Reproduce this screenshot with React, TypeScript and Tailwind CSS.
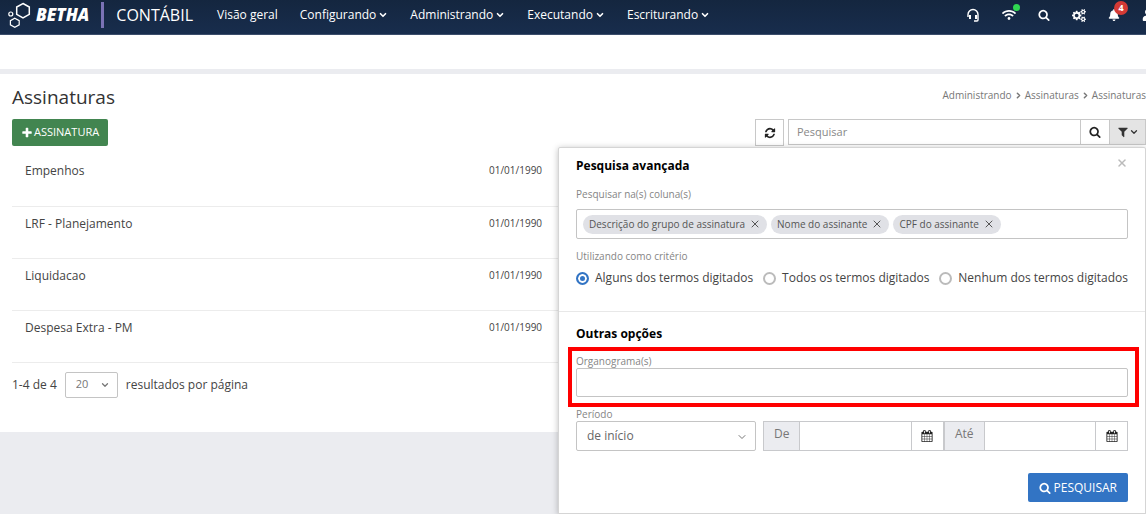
import { ChevronDown, ChevronRight, X } from 'lucide-react';
import type { FC, ReactNode } from 'react';
import { useState } from 'react';
import { FaBell, FaUser, FaWifi } from 'react-icons/fa';

const iconPaths = {
  search:
    'M1216 832q0-185-131.5-316.5t-316.5-131.5-316.5 131.5-131.5 316.5 131.5 316.5 316.5 131.5 316.5-131.5 131.5-316.5zm512 832q0 52-38 90t-90 38q-54 0-90-38l-343-342q-179 124-399 124-143 0-273.5-55.5t-225-150-150-225-55.5-273.5 55.5-273.5 150-225 225-150 273.5-55.5 273.5 55.5 225 150 150 225 55.5 273.5q0 220-124 399l343 343q37 37 37 90z',
  refresh:
    'M1639 1056q0 5-1 7-64 268-268 434.5t-478 166.5q-146 0-282.5-55t-243.5-157l-129 129q-19 19-45 19t-45-19-19-45v-448q0-26 19-45t45-19h448q26 0 45 19t19 45-19 45l-137 137q71 66 161 102t187 36q134 0 250-65t186-179q11-17 53-117 8-23 30-23h192q13 0 22.5 9.5t9.5 22.5zm25-800v448q0 26-19 45t-45 19h-448q-26 0-45-19t-19-45 19-45l138-138q-148-137-349-137-134 0-250 65t-186 179q-11 17-53 117-8 23-30 23h-199q-13 0-22.5-9.5t-9.5-22.5v-7q65-268 270-434.5t480-166.5q146 0 284 55.5t245 156.5l130-129q19-19 45-19t45 19 19 45z',
  filter:
    'M1595 295q17 41-14 70l-493 493v742q0 42-39 59-13 5-25 5-27 0-45-19l-256-256q-19-19-19-45v-486l-493-493q-31-29-14-70 17-39 59-39h1280q42 0 59 39z',
  plus: 'M1600 736v192q0 40-28 68t-68 28h-416v416q0 40-28 68t-68 28h-192q-40 0-68-28t-28-68v-416h-416q-40 0-68-28t-28-68v-192q0-40 28-68t68-28h416v-416q0-40 28-68t68-28h192q40 0 68 28t28 68v416h416q40 0 68 28t28 68z',
  calendar:
    'M192 1664h288v-288h-288v288zm352 0h320v-288h-320v288zm-352-352h288v-320h-288v320zm352 0h320v-320h-320v320zm-352-384h288v-288h-288v288zm736 736h320v-288h-320v288zm-384-736h320v-288h-320v288zm768 736h288v-288h-288v288zm-384-352h320v-320h-320v320zm-352-864v-288q0-13-9.5-22.5t-22.5-9.5h-64q-13 0-22.5 9.5t-9.5 22.5v288q0 13 9.5 22.5t22.5 9.5h64q13 0 22.5-9.5t9.5-22.5zm736 864h288v-320h-288v320zm-384-384h320v-288h-320v288zm384 0h288v-288h-288v288zm32-480v-288q0-13-9.5-22.5t-22.5-9.5h-64q-13 0-22.5 9.5t-9.5 22.5v288q0 13 9.5 22.5t22.5 9.5h64q13 0 22.5-9.5t9.5-22.5zm384-64v1280q0 52-38 90t-90 38h-1408q-52 0-90-38t-38-90v-1280q0-52 38-90t90-38h128v-96q0-66 47-113t113-47h64q66 0 113 47t47 113v96h384v-96q0-66 47-113t113-47h64q66 0 113 47t47 113v96h128q52 0 90 38t38 90z',
  cogs: 'M896 896q0-106-75-181t-181-75-181 75-75 181 75 181 181 75 181-75 75-181zm768 512q0-52-38-90t-90-38-90 38-38 90q0 53 37.5 90.5t90.5 37.5 90.5-37.5 37.5-90.5zm0-1024q0-52-38-90t-90-38-90 38-38 90q0 53 37.5 90.5t90.5 37.5 90.5-37.5 37.5-90.5zm-384 421v185q0 10-7 19.5t-16 10.5l-155 24q-11 35-32 76 34 48 90 115 7 11 7 20 0 12-7 19-23 30-82.5 89.5t-78.5 59.5q-11 0-21-7l-115-90q-37 19-77 31-11 108-23 155-7 24-30 24h-186q-11 0-20-7.5t-10-17.5l-23-153q-34-10-75-31l-118 89q-7 7-20 7-11 0-21-8-144-133-144-160 0-9 7-19 10-14 41-53t47-61q-23-44-35-82l-152-24q-10-1-17-9.5t-7-19.5v-185q0-10 7-19.5t16-10.5l155-24q11-35 32-76-34-48-90-115-7-11-7-20 0-12 7-20 22-30 82-89t79-59q11 0 21 7l115 90q34-18 77-32 11-108 23-154 7-24 30-24h186q11 0 20 7.5t10 17.5l23 153q34 10 75 31l118-89q8-7 20-7 11 0 21 8 144 133 144 160 0 8-7 19-12 16-42 54t-45 60q23 48 34 82l152 23q10 2 17 10.5t7 19.5zm640 533v140q0 16-149 31-12 27-30 52 51 113 51 138 0 4-4 7-122 71-124 71-8 0-46-47t-52-68q-20 2-30 2t-30-2q-14 21-52 68t-46 47q-2 0-124-71-4-3-4-7 0-25 51-138-18-25-30-52-149-15-149-31v-140q0-16 149-31 13-29 30-52-51-113-51-138 0-4 4-7 4-2 35-20t59-34 30-16q8 0 46 46.5t52 67.5q20-2 30-2t30 2q51-71 92-112l6-2q4 0 124 70 4 3 4 7 0 25-51 138 17 23 30 52 149 15 149 31zm0-1024v140q0 16-149 31-12 27-30 52 51 113 51 138 0 4-4 7-122 71-124 71-8 0-46-47t-52-68q-20 2-30 2t-30-2q-14 21-52 68t-46 47q-2 0-124-71-4-3-4-7 0-25 51-138-18-25-30-52-149-15-149-31v-140q0-16 149-31 13-29 30-52-51-113-51-138 0-4 4-7 4-2 35-20t59-34 30-16q8 0 46 46.5t52 67.5q20-2 30-2t30 2q51-71 92-112l6-2q4 0 124 70 4 3 4 7 0 25-51 138 17 23 30 52 149 15 149 31z',
};

type IconProps = { name: keyof typeof iconPaths; viewBox?: string; className?: string };

const Icon: FC<IconProps> = ({ name, viewBox = '0 0 1792 1792', className }) => (
  <svg viewBox={viewBox} fill="currentColor" aria-hidden="true" className={className}>
    <path d={iconPaths[name]} />
  </svg>
);

const navItems = [
  { label: 'Visão geral', hasMenu: false },
  { label: 'Configurando', hasMenu: true },
  { label: 'Administrando', hasMenu: true },
  { label: 'Executando', hasMenu: true },
  { label: 'Escriturando', hasMenu: true },
];

const assinaturas = [
  { descricao: 'Empenhos', data: '01/01/1990' },
  { descricao: 'LRF - Planejamento', data: '01/01/1990' },
  { descricao: 'Liquidacao', data: '01/01/1990' },
  { descricao: 'Despesa Extra - PM', data: '01/01/1990' },
];

const colunas = ['Descrição do grupo de assinatura', 'Nome do assinante', 'CPF do assinante'];

const criterios = [
  'Alguns dos termos digitados',
  'Todos os termos digitados',
  'Nenhum dos termos digitados',
];

const Logo: FC = () => (
  <svg viewBox="0 0 24 26" fill="none" stroke="#fff" aria-hidden="true" className="h-[26px] w-6">
    <path d="M15 1.5 21.3 5v7.3L15 16 8.7 12.3V5Z" strokeWidth="1.5" />
    <path d="M6.8 16.2 11.2 18.7v4.2L6.8 25.2 2.4 22.9v-4.2Z" strokeWidth="1.2" />
    <circle cx="2.8" cy="12" r="2" strokeWidth="1.2" />
  </svg>
);

const Header: FC = () => (
  <header className="flex h-[35px] items-center border-b border-[#3b4d6b] bg-linear-to-b from-[#14263f] to-[#182d4d] pb-1 text-white">
    <a href="#" className="ml-2 flex items-center gap-1">
      <Logo />
      <span className="text-[17px] font-extrabold italic">BETHA</span>
    </a>
    <span className="ml-3 h-[26px] w-[3px] bg-[#7a72b5]" />
    <span className="ml-3 text-base">CONTÁBIL</span>
    <nav className="ml-6 flex items-center gap-[22px] text-xs">
      {navItems.map((item) => (
        <a key={item.label} href="#" className="flex items-center gap-0.5">
          {item.label}
          {item.hasMenu && <ChevronDown size={10} strokeWidth={4} />}
        </a>
      ))}
    </nav>
    <div className="ml-auto flex shrink-0 items-center gap-[22px]">
      <button type="button" aria-label="Ajuda">
        <svg viewBox="0 0 14 14" fill="none" stroke="currentColor" className="size-3.5">
          <path d="M2 9V6.5a5 5 0 0 1 10 0V12q0 1-1 1H8" strokeWidth="1.4" />
          <path d="M4 7v4M10 7v4" strokeWidth="2" />
        </svg>
      </button>
      <button type="button" aria-label="Conexão" className="relative">
        <FaWifi size={14} />
        <span className="absolute -top-1 -right-1 size-[7px] rounded-full bg-[#2fd651]" />
      </button>
      <button type="button" aria-label="Buscar">
        <Icon name="search" className="size-3" />
      </button>
      <button type="button" aria-label="Configurações">
        <Icon name="cogs" viewBox="0 0 1920 1792" className="h-[13px] w-3.5" />
      </button>
      <button type="button" aria-label="Notificações" className="relative">
        <FaBell size={12} />
        <span className="absolute -top-2 -right-2 flex size-3.5 items-center justify-center rounded-full bg-[#d43a35] text-[9px] leading-3 font-bold">
          4
        </span>
      </button>
      <button type="button" aria-label="Usuário" className="-mr-2">
        <FaUser size={12} />
      </button>
    </div>
  </header>
);

const FieldLabel: FC<{ htmlFor: string; children: ReactNode }> = ({ htmlFor, children }) => (
  <label htmlFor={htmlFor} className="block text-[10px] leading-[14px] text-[#858585]">
    {children}
  </label>
);

const DateInput: FC<{ id: string; label: string }> = ({ id, label }) => (
  <div className="flex min-w-0 flex-auto">
    <label
      htmlFor={id}
      className="flex shrink-0 items-center border border-r-0 border-[#c8c9cc] bg-[#ebecf0] px-2.5 pb-1 text-xs text-[#777]"
    >
      {label}
    </label>
    <input id={id} type="text" className="w-0 min-w-0 flex-1 border border-r-0 border-[#c8c9cc] px-2 text-xs outline-none" />
    <button
      type="button"
      aria-label={`Abrir calendário ${label}`}
      className="flex w-[33px] shrink-0 items-center justify-center border border-[#c8c9cc] text-[#222]"
    >
      <Icon name="calendar" className="size-3" />
    </button>
  </div>
);

const AdvancedSearch: FC<{ onClose: () => void }> = ({ onClose }) => {
  const [criterio, setCriterio] = useState(criterios[0]);

  return (
    <form
      className="absolute top-7 right-0 z-10 w-[588px] rounded-t-xs border border-[#d5d5d5] bg-white pb-[11px] shadow-[0_1px_6px_rgba(0,0,0,0.25)]"
      onSubmit={(e) => e.preventDefault()}
    >
      <div className="border-b border-[#e8e8e8] px-[17px] pt-[9px] pb-6">
        <div className="flex items-start justify-between">
          <h2 className="text-xs leading-[18px] font-bold text-black">Pesquisa avançada</h2>
          <button type="button" aria-label="Fechar" onClick={onClose} className="text-[#bbb]">
            <X size={12} strokeWidth={3} />
          </button>
        </div>
        <div className="mt-3">
          <FieldLabel htmlFor="colunas">Pesquisar na(s) coluna(s)</FieldLabel>
          <div className="mt-2 flex h-[30px] items-center gap-1 rounded-xs border border-[#c4c4c4] px-1.5">
            {colunas.map((coluna) => (
              <span
                key={coluna}
                className="flex h-[19px] shrink-0 items-center gap-1 rounded-full bg-[#e0e1e6] px-1.5 text-[10px] text-[#555]"
              >
                {coluna}
                <button type="button" aria-label={`Remover ${coluna}`}>
                  <X size={12} strokeWidth={2} />
                </button>
              </span>
            ))}
            <input id="colunas" type="text" className="w-0 min-w-0 flex-1 outline-none" />
          </div>
        </div>
        <fieldset className="mt-2.5">
          <legend className="text-[10px] leading-[14px] text-[#858585]">Utilizando como critério</legend>
          <div className="mt-1.5 flex justify-between">
            {criterios.map((item) => (
              <label key={item} className="flex items-center gap-1.5 text-xs leading-[18px] text-[#444]">
                <input
                  type="radio"
                  name="criterio"
                  checked={criterio === item}
                  onChange={() => setCriterio(item)}
                  className="size-[13px] appearance-none rounded-full border-2 border-[#bbb] bg-white checked:border-[#3274c4] checked:bg-[#3274c4] checked:shadow-[inset_0_0_0_2px_#fff]"
                />
                {item}
              </label>
            ))}
          </div>
        </fieldset>
      </div>

      <div className="px-[17px] pt-[13px]">
        <h2 className="text-xs leading-[18px] font-bold text-black">Outras opções</h2>
        <div className="-mr-[11px] -ml-2 mt-1 border-4 border-[#ff0000] pt-[3px] pr-[7px] pb-1.5 pl-1">
          <FieldLabel htmlFor="organograma">Organograma(s)</FieldLabel>
          <input
            id="organograma"
            type="text"
            className="block h-[29px] w-full rounded-xs border border-[#c4c4c4] px-2 text-xs outline-none"
          />
        </div>
        <FieldLabel htmlFor="periodo">Período</FieldLabel>
        <div className="flex h-[30px] gap-[7px]">
          <div className="relative w-[180px] shrink-0">
            <select
              id="periodo"
              className="size-full appearance-none rounded-xs border border-[#c4c4c4] bg-white px-2.5 text-xs text-[#666]"
            >
              <option>de início</option>
            </select>
            <ChevronDown size={12} strokeWidth={2} className="absolute top-2.5 right-2 text-[#777]" />
          </div>
          <div className="flex min-w-0 flex-1">
            <DateInput id="data-de" label="De" />
            <DateInput id="data-ate" label="Até" />
          </div>
        </div>
        <div className="mt-[22px] flex justify-end">
          <button
            type="submit"
            className="flex h-[29px] items-center gap-[3px] rounded-xs bg-[#3274c4] px-[11px] text-xs text-white"
          >
            <Icon name="search" className="size-3" />
            PESQUISAR
          </button>
        </div>
      </div>
    </form>
  );
};

const SearchBar: FC = () => {
  const [isOpen, setIsOpen] = useState(true);

  return (
    <div className="relative flex h-[27px] gap-1">
      <button
        type="button"
        aria-label="Atualizar"
        className="flex w-[29px] items-center justify-center border border-[#c8c8c8] text-[#222]"
      >
        <Icon name="refresh" className="size-3" />
      </button>
      <div className="flex h-[26px]">
        <input
          type="text"
          aria-label="Pesquisar"
          placeholder="Pesquisar"
          className="w-[293px] border border-[#c8c8c8] px-2 text-[11px] outline-none placeholder:text-[#888]"
        />
        <button
          type="button"
          aria-label="Pesquisar"
          className="flex w-7 items-center justify-center border-y border-[#c8c8c8] text-[#222]"
        >
          <Icon name="search" className="size-3" />
        </button>
        <button
          type="button"
          aria-label="Pesquisa avançada"
          onClick={() => setIsOpen(!isOpen)}
          className="flex w-[37px] items-center justify-center border border-[#c8c8c8] bg-[#e4e4e4] text-[#333]"
        >
          <Icon name="filter" className="size-3" />
          <ChevronDown size={10} strokeWidth={3} />
        </button>
      </div>
      {isOpen && <AdvancedSearch onClose={() => setIsOpen(false)} />}
    </div>
  );
};

const App: FC = () => {
  return (
    <div className="overflow-x-clip bg-white font-['Open_Sans',sans-serif] text-[#444]">
      <Header />
      <div className="h-[34px] bg-white" />
      <div className="bg-[#ebecf0] pt-[5px] pb-[82px]">
        <main className="bg-white pt-[11px] pb-[34px] pl-3">
          <div className="flex items-center justify-between">
            <h1 className="text-[19px] leading-6 text-[#333]">Assinaturas</h1>
            <nav aria-label="Localização" className="flex items-center gap-0.5 pb-1 text-[10px] text-[#777]">
              <a href="#">Administrando</a>
              <ChevronRight size={9} strokeWidth={4} />
              <a href="#">Assinaturas</a>
              <ChevronRight size={9} strokeWidth={4} />
              <span>Assinaturas</span>
            </nav>
          </div>

          <div className="mt-2.5 flex justify-between">
            <button
              type="button"
              className="flex h-[27px] items-center gap-px rounded-xs bg-[#428550] px-[9px] text-[11px] text-white"
            >
              <Icon name="plus" className="size-3" />
              ASSINATURA
            </button>
            <SearchBar />
          </div>

          <table className="mt-2 w-full table-fixed text-xs">
            <tbody>
              {assinaturas.map((item) => (
                <tr key={item.descricao} className="h-[52px] border-b border-[#ececec] align-top">
                  <td className="w-[464px] pt-2 pl-[13px] leading-[18px]">{item.descricao}</td>
                  <td className="pt-2 pl-[13px] text-[10px] leading-4">{item.data}</td>
                </tr>
              ))}
            </tbody>
          </table>

          <div className="mt-[9px] flex items-center text-xs">
            <span>1-4 de 4</span>
            <div className="relative mx-2">
              <select
                aria-label="Resultados por página"
                className="block h-[26px] w-[53px] appearance-none rounded-xs border border-[#c4c4c4] bg-white px-2.5 text-[11px] text-[#777]"
              >
                <option>20</option>
              </select>
              <ChevronDown size={10} strokeWidth={3} className="absolute top-2 right-2 text-[#777]" />
            </div>
            <span>resultados por página</span>
          </div>
        </main>
      </div>
    </div>
  );
};

export default App;
